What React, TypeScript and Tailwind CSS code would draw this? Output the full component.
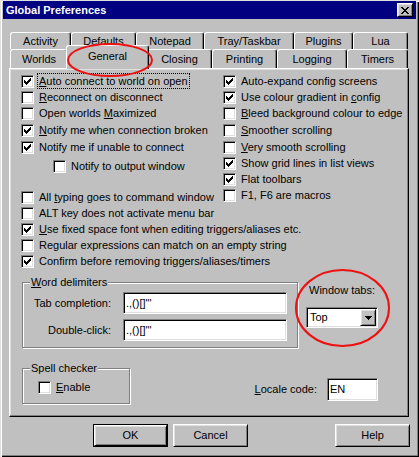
import type { ReactNode } from "react";

const sunken =
  "border border-t-[#808080] border-l-[#808080] border-r-white border-b-white shadow-[inset_1px_1px_0_#000,inset_-1px_-1px_0_#dfdfdf]";
const raised =
  "border border-t-white border-l-white border-r-black border-b-black shadow-[inset_1px_1px_0_#dfdfdf,inset_-1px_-1px_0_#808080]";

function Box({ checked }: { checked?: boolean }) {
  return (
    <span className={`w-[13px] h-[13px] shrink-0 bg-white flex items-center justify-center ${sunken}`}>
      {checked && (
        <svg width="7" height="7" viewBox="0 0 7 7" shapeRendering="crispEdges">
          <path d="M6 0h1v3h-1zM5 1h1v3h-1zM4 2h1v3h-1zM3 3h1v3h-1zM2 4h1v3h-1zM1 3h1v3h-1zM0 2h1v3h-1z" fill="#000" />
        </svg>
      )}
    </span>
  );
}

function Check({
  checked,
  h = "h-[16px]",
  focus,
  className = "",
  children,
}: {
  checked?: boolean;
  h?: string;
  focus?: boolean;
  className?: string;
  children: ReactNode;
}) {
  return (
    <div className={`flex items-center whitespace-nowrap ${h} ${className}`}>
      <Box checked={checked} />
      {focus ? (
        <span className="ml-[3px] h-[16px] px-[1px] flex items-center border border-dotted border-black">{children}</span>
      ) : (
        <span className="ml-[5px]">{children}</span>
      )}
    </div>
  );
}

function Tab({ w, label, selected, h }: { w: string; label: string; selected?: boolean; h: string }) {
  return (
    <div
      className={`${w} ${h} shrink-0 flex items-center justify-center rounded-t-[3px] border-t border-l border-r border-t-white border-l-white border-r-black shadow-[inset_-1px_0_0_#808080] bg-[#c0c0c0] ${
        selected ? "relative z-10 -mx-[2px] -mt-[4px] pb-[2px]" : ""
      }`}
    >
      {label}
    </div>
  );
}

function Edit({ w, h = "h-[22px]", children }: { w: string; h?: string; children: ReactNode }) {
  return <div className={`${w} ${h} bg-white flex items-center pl-[2px] ${sunken}`}>{children}</div>;
}

function Button({ children, isDefault, className = "" }: { children: ReactNode; isDefault?: boolean; className?: string }) {
  if (isDefault) {
    return (
      <div className={`w-[75px] h-[23px] border border-black ${className}`}>
        <div className={`w-full h-full flex items-center justify-center ${raised}`}>{children}</div>
      </div>
    );
  }
  return <div className={`w-[75px] h-[23px] flex items-center justify-center ${raised} ${className}`}>{children}</div>;
}

export default function App() {
  return (
    <div className="relative w-[419px] h-[457px] overflow-hidden bg-[#c0c0c0] px-[3px] pt-[1px] text-[11px] leading-[13px] text-black font-['Liberation_Sans',Arial,sans-serif] shadow-[inset_1px_1px_0_#dfdfdf,inset_2px_2px_0_#fff,inset_-1px_-1px_0_#000,inset_-2px_-2px_0_#808080]">
      {/* title bar */}
      <div className="h-[18px] bg-[#000080] flex items-center justify-between pl-[3px] pr-[3px]">
        <span className="text-white font-bold">Global Preferences</span>
        <div className={`w-[16px] h-[14px] bg-[#c0c0c0] flex items-center justify-center ${raised}`}>
          <svg width="8" height="7" viewBox="0 0 8 7" shapeRendering="crispEdges">
            <path d="M0 0h2v1h-2zM1 1h2v1h-2zM2 2h4v1h-4zM3 3h2v1h-2zM2 4h4v1h-4zM1 5h2v1h-2zM0 6h2v1h-2zM6 0h2v1h-2zM5 1h2v1h-2zM5 5h2v1h-2zM6 6h2v1h-2z" fill="#000" />
          </svg>
        </div>
      </div>

      <div className="mt-[13px] ml-[6px] w-[400px]">
        <div className="flex pl-[1px] h-[17px]">
          <Tab w="w-[61px]" h="h-[17px]" label="Activity" />
          <Tab w="w-[65px]" h="h-[17px]" label="Defaults" />
          <Tab w="w-[68px]" h="h-[17px]" label="Notepad" />
          <Tab w="w-[90px]" h="h-[17px]" label="Tray/Taskbar" />
          <Tab w="w-[59px]" h="h-[17px]" label="Plugins" />
          <Tab w="w-[55px]" h="h-[17px]" label="Lua" />
        </div>
        <div className="flex items-start pl-[1px] h-[19px]">
          <Tab w="w-[58px]" h="h-[19px]" label="Worlds" />
          <Tab w="w-[83px]" h="h-[24px]" label="General" selected />
          <Tab w="w-[65px]" h="h-[19px]" label="Closing" />
          <Tab w="w-[65px]" h="h-[19px]" label="Printing" />
          <Tab w="w-[70px]" h="h-[19px]" label="Logging" />
          <Tab w="w-[61px]" h="h-[19px]" label="Timers" />
        </div>

        <div className="h-[349px] border border-t-white border-l-white border-r-black border-b-black shadow-[inset_-1px_-1px_0_#808080,inset_1px_1px_0_#dfdfdf] pt-[4px] pl-[11px]">
          <div className="flex">
            <div className="w-[202px] flex flex-col">
              <Check checked focus>
                <u>A</u>uto connect to world on open
              </Check>
              <Check>
                <u>R</u>econnect on disconnect
              </Check>
              <Check h="h-[17px]">
                Open worlds <u>M</u>aximized
              </Check>
              <Check checked h="h-[17px]">
                <u>N</u>otify me when connection broken
              </Check>
              <Check checked>Notify me if unable to connect</Check>
              <Check h="h-[22px]" className="pl-[32px]">
                Notify to output window
              </Check>
              <div className="h-[12px]" />
              <Check>
                All <u>t</u>yping goes to command window
              </Check>
              <Check>ALT key does not activate menu bar</Check>
            </div>
            <div className="flex flex-col">
              <Check checked>Auto-expand config screens</Check>
              <Check checked>
                Use colour gradient in <u>c</u>onfig
              </Check>
              <Check h="h-[17px]">
                <u>B</u>leed background colour to edge
              </Check>
              <Check h="h-[17px]">
                <u>S</u>moother scrolling
              </Check>
              <Check>
                <u>V</u>ery smooth scrolling
              </Check>
              <Check checked>Show grid lines in list views</Check>
              <Check checked>Flat toolbars</Check>
              <Check h="h-[17px]">F1, F6 are macros</Check>
            </div>
          </div>
          <Check checked>
            <u>U</u>se fixed space font when editing triggers/aliases etc.
          </Check>
          <Check>Regular expressions can match on an empty string</Check>
          <Check checked>Confirm before removing triggers/aliases/timers</Check>

          <div className="mt-[13px] ml-[1px] flex items-start">
            <div className="relative w-[276px] h-[66px] border border-[#808080] shadow-[1px_1px_0_#fff,inset_1px_1px_0_#fff] pt-[9px]">
              <span className="absolute left-[7px] -top-[7px] px-[1px] bg-[#c0c0c0]">
                <u>W</u>ord delimiters
              </span>
              <div className="flex items-center">
                <span className="w-[88px] text-right">Tab completion:</span>
                <div className="ml-[12px]">
                  <Edit w="w-[164px]">.,()[]"'</Edit>
                </div>
              </div>
              <div className="flex items-center mt-[5px]">
                <span className="w-[88px] text-right">Double-click:</span>
                <div className="ml-[12px]">
                  <Edit w="w-[164px]">.,()[]"'</Edit>
                </div>
              </div>
            </div>
            <div className="ml-[8px] flex flex-col">
              <span className="mt-[2px] pl-[3px]">Window tabs:</span>
              <div className={`mt-[10px] w-[72px] h-[21px] bg-white flex items-stretch p-[1px] ${sunken}`}>
                <span className="flex-1 flex items-center pl-[2px]">Top</span>
                <span className={`w-[16px] bg-[#c0c0c0] flex items-center justify-center ${raised}`}>
                  <svg width="7" height="4" viewBox="0 0 7 4" shapeRendering="crispEdges">
                    <path d="M0 0h7v1h-7zM1 1h5v1h-5zM2 2h3v1h-3zM3 3h1v1h-1z" fill="#000" />
                  </svg>
                </span>
              </div>
            </div>
          </div>

          <div className="mt-[20px] flex items-start">
            <div className="relative ml-[1px] w-[108px] h-[36px] border border-[#808080] shadow-[1px_1px_0_#fff,inset_1px_1px_0_#fff]">
              <span className="absolute left-[7px] -top-[7px] px-[1px] bg-[#c0c0c0]">Spell checker</span>
              <div className="mt-[12px] ml-[15px] flex items-center">
                <Box />
                <span className="ml-[5px]">
                  <u>E</u>nable
                </span>
              </div>
            </div>
            <div className="ml-auto mr-[30px] mt-[10px] flex items-center">
              <span>
                <u>L</u>ocale code:
              </span>
              <div className="ml-[10px]">
                <Edit w="w-[51px]" h="h-[23px]">
                  EN
                </Edit>
              </div>
            </div>
          </div>
        </div>
      </div>

      <div className="mt-[7px] flex">
        <Button isDefault className="ml-[90px]">
          OK
        </Button>
        <Button className="ml-[5px]">Cancel</Button>
        <Button className="ml-[87px]">Help</Button>
      </div>

      <svg className="absolute left-0 top-0 z-20 pointer-events-none" width="419" height="457" viewBox="0 0 419 457">
        <ellipse cx="110" cy="60" rx="42" ry="16" fill="none" stroke="#ee1111" strokeWidth="2" />
        <ellipse cx="342.5" cy="308" rx="46.5" ry="38" fill="none" stroke="#ee1111" strokeWidth="2" />
      </svg>
    </div>
  );
}
